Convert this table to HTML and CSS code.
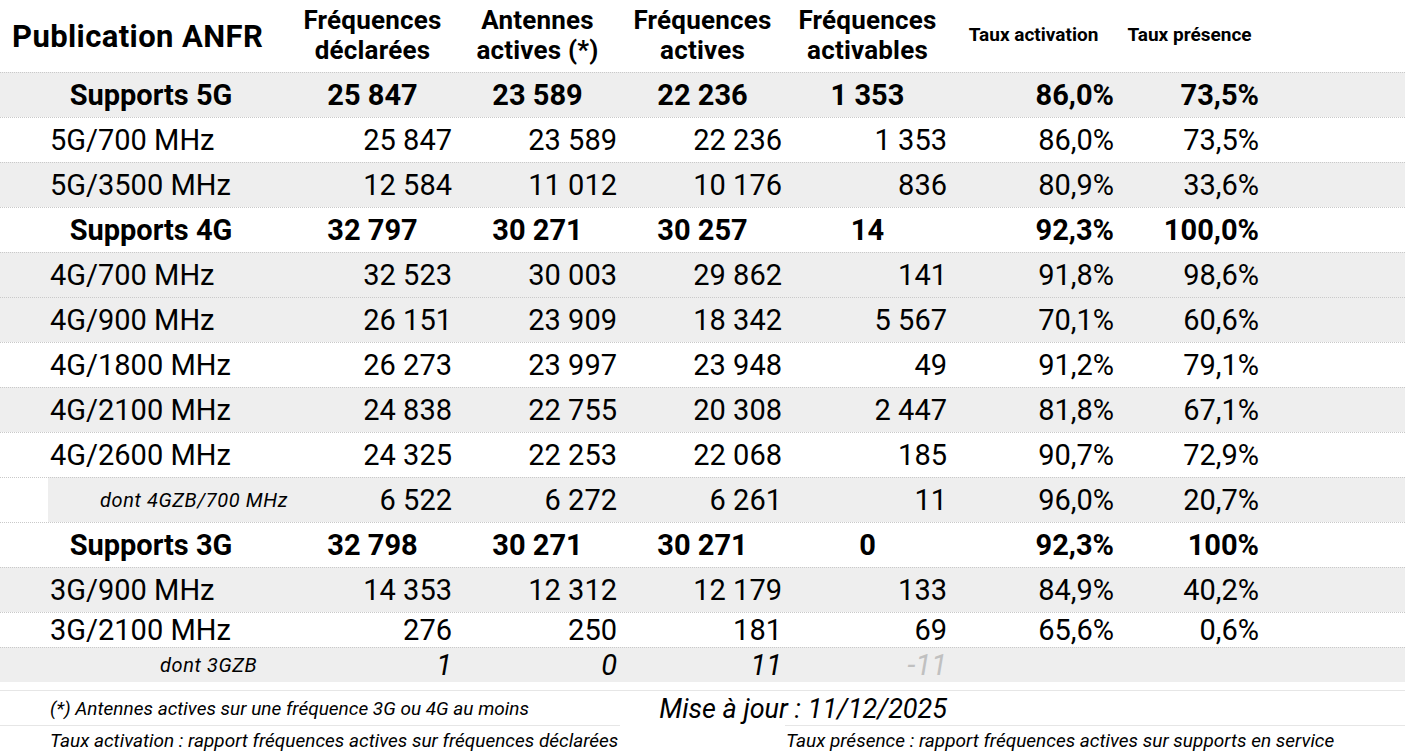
FILE: index.html
```html
<!DOCTYPE html>
<html lang="fr">
<head>
<meta charset="utf-8">
<title>Publication ANFR</title>
<link rel="stylesheet" href="styles.css">
</head>
<body>
<div class="sheet">
  <div class="row head">
    <div class="title">Publication ANFR</div>
    <div class="colhead">Fréquences<br>déclarées</div>
    <div class="colhead">Antennes<br>actives (*)</div>
    <div class="colhead">Fréquences<br>actives</div>
    <div class="colhead">Fréquences<br>activables</div>
    <div class="colhead small">Taux activation</div>
    <div class="colhead small">Taux présence</div>
    <div></div>
  </div>

  <div class="row grey total">
    <div class="label">Supports 5G</div>
    <div class="c">25 847</div><div class="c">23 589</div><div class="c">22 236</div><div class="c">1 353</div>
    <div class="n">86,0%</div><div class="n">73,5%</div><div></div>
  </div>
  <div class="row">
    <div class="label">5G/700 MHz</div>
    <div class="n">25 847</div><div class="n">23 589</div><div class="n">22 236</div><div class="n">1 353</div>
    <div class="n">86,0%</div><div class="n">73,5%</div><div></div>
  </div>
  <div class="row grey">
    <div class="label">5G/3500 MHz</div>
    <div class="n">12 584</div><div class="n">11 012</div><div class="n">10 176</div><div class="n">836</div>
    <div class="n">80,9%</div><div class="n">33,6%</div><div></div>
  </div>

  <div class="row total">
    <div class="label">Supports 4G</div>
    <div class="c">32 797</div><div class="c">30 271</div><div class="c">30 257</div><div class="c">14</div>
    <div class="n">92,3%</div><div class="n">100,0%</div><div></div>
  </div>
  <div class="row grey">
    <div class="label">4G/700 MHz</div>
    <div class="n">32 523</div><div class="n">30 003</div><div class="n">29 862</div><div class="n">141</div>
    <div class="n">91,8%</div><div class="n">98,6%</div><div></div>
  </div>
  <div class="row grey">
    <div class="label">4G/900 MHz</div>
    <div class="n">26 151</div><div class="n">23 909</div><div class="n">18 342</div><div class="n">5 567</div>
    <div class="n">70,1%</div><div class="n">60,6%</div><div></div>
  </div>
  <div class="row">
    <div class="label">4G/1800 MHz</div>
    <div class="n">26 273</div><div class="n">23 997</div><div class="n">23 948</div><div class="n">49</div>
    <div class="n">91,2%</div><div class="n">79,1%</div><div></div>
  </div>
  <div class="row grey">
    <div class="label">4G/2100 MHz</div>
    <div class="n">24 838</div><div class="n">22 755</div><div class="n">20 308</div><div class="n">2 447</div>
    <div class="n">81,8%</div><div class="n">67,1%</div><div></div>
  </div>
  <div class="row">
    <div class="label">4G/2600 MHz</div>
    <div class="n">24 325</div><div class="n">22 253</div><div class="n">22 068</div><div class="n">185</div>
    <div class="n">90,7%</div><div class="n">72,9%</div><div></div>
  </div>
  <div class="row indent">
    <div class="label sub sub4">dont 4GZB/700 MHz</div>
    <div class="n">6 522</div><div class="n">6 272</div><div class="n">6 261</div><div class="n">11</div>
    <div class="n">96,0%</div><div class="n">20,7%</div><div></div>
  </div>

  <div class="row total">
    <div class="label">Supports 3G</div>
    <div class="c">32 798</div><div class="c">30 271</div><div class="c">30 271</div><div class="c">0</div>
    <div class="n">92,3%</div><div class="n">100%</div><div></div>
  </div>
  <div class="row grey">
    <div class="label">3G/900 MHz</div>
    <div class="n">14 353</div><div class="n">12 312</div><div class="n">12 179</div><div class="n">133</div>
    <div class="n">84,9%</div><div class="n">40,2%</div><div></div>
  </div>
  <div class="row short">
    <div class="label">3G/2100 MHz</div>
    <div class="n">276</div><div class="n">250</div><div class="n">181</div><div class="n">69</div>
    <div class="n">65,6%</div><div class="n">0,6%</div><div></div>
  </div>
  <div class="row short grey italic">
    <div class="label sub sub3">dont 3GZB</div>
    <div class="n">1</div><div class="n">0</div><div class="n">11</div><div class="n faded">-11</div>
    <div></div><div></div><div></div>
  </div>

  <div class="foot">
    <div class="foot-row first">
      <div class="note span3 lined">(*) Antennes actives sur une fréquence 3G ou 4G au moins</div>
      <div class="update">Mise à jour : 11/12/2025</div>
      <div class="span3 lined"></div>
    </div>
    <div class="foot-row second">
      <div class="note span4">Taux activation : rapport fréquences actives sur fréquences déclarées</div>
      <div class="note span4 right-note">Taux présence : rapport fréquences actives sur supports en service</div>
    </div>
  </div>
</div>
</body>
</html>
```

FILE: styles.css
```css
html, body {
  margin: 0;
  padding: 0;
  background: #ffffff;
}

body {
  font-family: Roboto, "Liberation Sans", Arial, sans-serif;
  color: #000;
  width: 1405px;
  height: 755px;
  overflow: hidden;
}

.row,
.foot-row {
  display: grid;
  grid-template-columns: 290px 165px 165px 165px 165px 167px 145px 1fr;
}

.row {
  height: 44px;
  border-top: 1px dotted #c9c9c9;
  align-items: center;
  font-size: 29px;
}

.row.short {
  height: 34px;
}

.row.grey {
  background: #eeeeee;
}

.row.indent {
  background: linear-gradient(90deg, #ffffff 48px, #eeeeee 48px);
}

.row.head {
  height: 72px;
  border-top: none;
  align-items: center;
}

.title {
  font-weight: 700;
  font-size: 31px;
  letter-spacing: 0.4px;
  padding-left: 12px;
  white-space: nowrap;
}

.colhead {
  font-weight: 700;
  font-size: 26px;
  letter-spacing: 0.2px;
  line-height: 30px;
  text-align: center;
  padding-bottom: 2px;
}

.colhead.small {
  font-size: 19px;
  letter-spacing: 0;
  line-height: 22px;
}

.label {
  padding-left: 50px;
  white-space: nowrap;
}

.total {
  font-weight: 700;
}

.total .label {
  text-align: center;
  padding-left: 12px;
}

.c {
  text-align: center;
}

.n {
  text-align: right;
  padding-right: 3px;
  white-space: nowrap;
}

.sub {
  font-style: italic;
  font-size: 20px;
  letter-spacing: 0.6px;
}

.sub4 {
  padding-left: 100px;
}

.sub3 {
  padding-left: 160px;
}

.italic .n {
  font-style: italic;
}

.faded {
  color: #c0c0c0;
}

.foot {
  padding-top: 8px;
}

.foot-row.first {
  height: 35px;
  border-top: 1px solid #e6e6e6;
  align-items: center;
}

.foot-row.second {
  height: 28px;
  align-items: center;
}

.span3 {
  grid-column: span 3;
}

.span4 {
  grid-column: span 4;
}

.lined {
  align-self: stretch;
  display: flex;
  align-items: center;
  border-bottom: 1px solid #e6e6e6;
}

.note {
  font-style: italic;
  font-size: 19px;
  padding-left: 50px;
  white-space: nowrap;
}

.right-note {
  padding-left: 1px;
}

.update {
  grid-column: span 2;
  align-self: stretch;
  display: flex;
  align-items: center;
  justify-content: flex-end;
  padding-right: 3px;
  font-style: italic;
  font-size: 27px;
  white-space: nowrap;
  background: linear-gradient(#e6e6e6, #e6e6e6) no-repeat right bottom / 165px 1px;
}
```
